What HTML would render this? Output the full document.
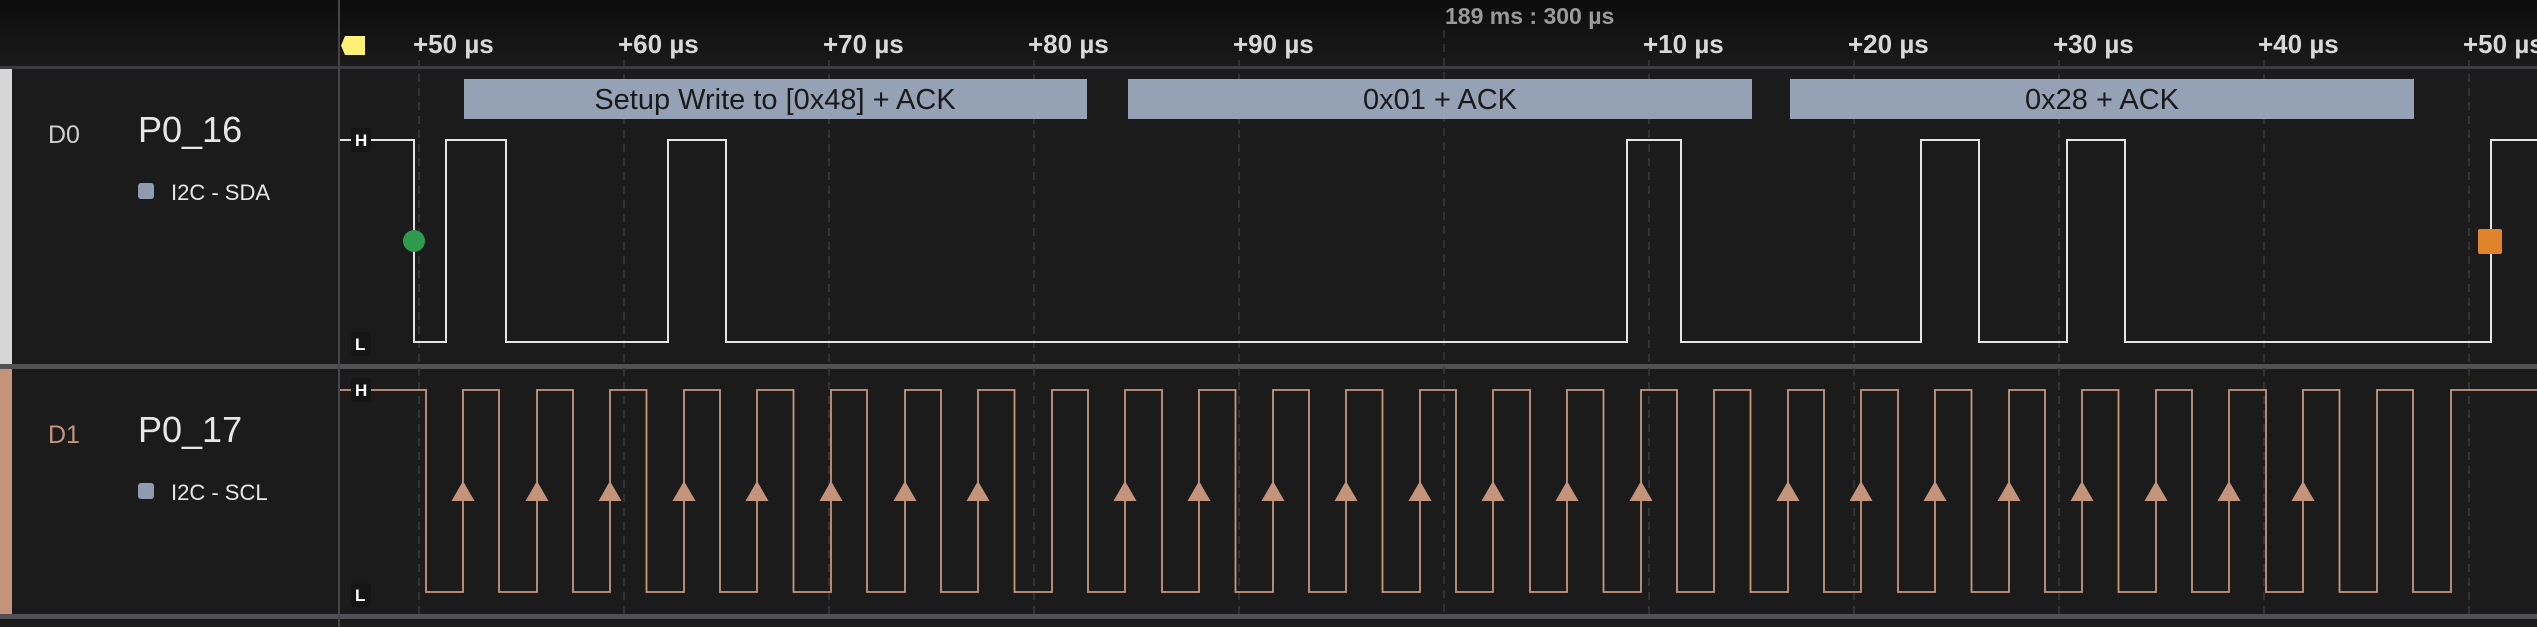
<!DOCTYPE html>
<html><head><meta charset="utf-8"><style>
html,body{margin:0;padding:0;background:#1b1b1b;width:2537px;height:627px;overflow:hidden}
svg{display:block}
text{font-family:"Liberation Sans",sans-serif}
</style></head><body>
<svg width="2537" height="627" viewBox="0 0 2537 627" xmlns="http://www.w3.org/2000/svg">
<defs>
<linearGradient id="hg" x1="0" y1="0" x2="0" y2="1"><stop offset="0" stop-color="#0c0c0c"/><stop offset="1" stop-color="#1a1a1a"/></linearGradient>
<polygon id="t" points="0,481 -11.5,501 11.5,501" fill="#c4947a"/>
</defs>
<rect width="2537" height="627" fill="#1b1b1b"/>
<rect width="2537" height="67" fill="url(#hg)"/>
<rect y="66" width="2537" height="3" fill="#3c3c40"/>
<rect y="364" width="2537" height="5" fill="#505055"/>
<rect y="614" width="2537" height="5" fill="#505055"/>
<rect y="619" width="2537" height="8" fill="#1b1b1b"/>
<rect x="338" y="0" width="2" height="627" fill="#46464a"/>
<rect x="0" y="69" width="12" height="295" fill="#d6d6d6"/>
<rect x="0" y="369" width="12" height="245" fill="#c4947a"/>

<g stroke="#3e3e3e" stroke-width="1.3" stroke-dasharray="8 6">
<line x1="419" y1="60" x2="419" y2="614"/><line x1="624" y1="60" x2="624" y2="614"/><line x1="829" y1="60" x2="829" y2="614"/><line x1="1034" y1="60" x2="1034" y2="614"/><line x1="1239" y1="60" x2="1239" y2="614"/><line x1="1444" y1="30" x2="1444" y2="614"/><line x1="1649" y1="60" x2="1649" y2="614"/><line x1="1854" y1="60" x2="1854" y2="614"/><line x1="2059" y1="60" x2="2059" y2="614"/><line x1="2264" y1="60" x2="2264" y2="614"/><line x1="2469" y1="60" x2="2469" y2="614"/>
</g>

<g fill="#d8d8d8" font-weight="bold" font-size="26">
<text x="413" y="53">+50 µs</text><text x="618" y="53">+60 µs</text><text x="823" y="53">+70 µs</text><text x="1028" y="53">+80 µs</text><text x="1233" y="53">+90 µs</text><text x="1643" y="53">+10 µs</text><text x="1848" y="53">+20 µs</text><text x="2053" y="53">+30 µs</text><text x="2258" y="53">+40 µs</text><text x="2463" y="53">+50 µs</text>
</g>
<text x="1445" y="24" fill="#9a9a9a" font-weight="bold" font-size="23">189 ms : 300 µs</text>
<polygon points="345,36 365,36 365,55 345,55 341,45.5" fill="#fff176"/>

<text x="48" y="143" fill="#cfcfcf" font-size="25">D0</text>
<text x="138" y="142" fill="#e6e6e6" font-size="36">P0_16</text>
<rect x="138" y="183" width="16" height="16" rx="3" fill="#8f9bb0"/>
<text x="171" y="200" fill="#e6e6e6" font-size="22">I2C - SDA</text>
<text x="48" y="443" fill="#c4947a" font-size="25">D1</text>
<text x="138" y="442" fill="#e6e6e6" font-size="36">P0_17</text>
<rect x="138" y="483" width="16" height="16" rx="3" fill="#8f9bb0"/>
<text x="171" y="500" fill="#e6e6e6" font-size="22">I2C - SCL</text>

<g fill="#95a1b5">
<rect x="464" y="79" width="623" height="40"/><rect x="1128" y="79" width="624" height="40"/><rect x="1790" y="79" width="624" height="40"/>
</g>
<g fill="#1a1a1a" font-size="29" text-anchor="middle">
<text x="775" y="109">Setup Write to [0x48] + ACK</text><text x="1440" y="109">0x01 + ACK</text><text x="2102" y="109">0x28 + ACK</text>
</g>

<path d="M340 140 H414 V342 H446 V140 H506 V342 H668 V140 H726 V342 H1627 V140 H1681 V342 H1921 V140 H1979 V342 H2067 V140 H2125 V342 H2491 V140 H2537" fill="none" stroke="#e4e4e4" stroke-width="2"/>
<circle cx="414" cy="241" r="11" fill="#2e9a4e"/>
<rect x="2478" y="229" width="24" height="25" rx="2" fill="#e0832a"/>

<path d="M340 390 H426 V592 H463 V390 H499 V592 H537 V390 H573 V592 H610 V390 H646.5 V592 H684 V390 H720 V592 H757 V390 H793.5 V592 H831 V390 H867 V592 H905 V390 H941 V592 H978 V390 H1014.5 V592 H1052 V390 H1088 V592 H1125 V390 H1162 V592 H1199 V390 H1235.5 V592 H1273 V390 H1309 V592 H1346 V390 H1382.5 V592 H1420 V390 H1456 V592 H1493 V390 H1530 V592 H1567 V390 H1603.5 V592 H1641 V390 H1677 V592 H1714 V390 H1750.5 V592 H1788 V390 H1824 V592 H1861 V390 H1898 V592 H1935 V390 H1971.5 V592 H2009 V390 H2045 V592 H2082 V390 H2118.5 V592 H2156 V390 H2192 V592 H2229 V390 H2266 V592 H2303 V390 H2339.5 V592 H2377 V390 H2413 V592 H2451 V390 H2537" fill="none" stroke="#c8967c" stroke-width="1.8"/>
<g>
<use href="#t" x="463"/><use href="#t" x="537"/><use href="#t" x="610"/><use href="#t" x="684"/><use href="#t" x="757"/><use href="#t" x="831"/><use href="#t" x="905"/><use href="#t" x="978"/>
<use href="#t" x="1125"/><use href="#t" x="1199"/><use href="#t" x="1273"/><use href="#t" x="1346"/><use href="#t" x="1420"/><use href="#t" x="1493"/><use href="#t" x="1567"/><use href="#t" x="1641"/>
<use href="#t" x="1788"/><use href="#t" x="1861"/><use href="#t" x="1935"/><use href="#t" x="2009"/><use href="#t" x="2082"/><use href="#t" x="2156"/><use href="#t" x="2229"/><use href="#t" x="2303"/>
</g>

<g fill="#151515">
<rect x="351" y="128" width="20" height="24" rx="3"/><rect x="351" y="332" width="20" height="24" rx="3"/>
<rect x="351" y="378" width="20" height="24" rx="3"/><rect x="351" y="583" width="20" height="24" rx="3"/>
</g>
<g fill="#ffffff" font-weight="bold" font-size="17">
<text x="355" y="146">H</text><text x="355" y="350">L</text><text x="355" y="396">H</text><text x="355" y="601">L</text>
</g>
</svg>
</body></html>
